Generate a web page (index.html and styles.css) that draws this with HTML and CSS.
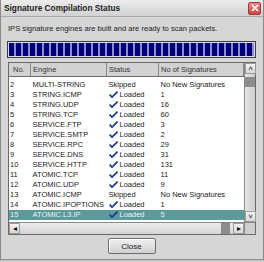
FILE: index.html
```html
<!DOCTYPE html>
<html lang="en">
<head>
    <meta charset="UTF-8">
    <title>Signature Compilation Status</title>
    <link rel="stylesheet" href="styles.css">
</head>
<body>
    <div class="window">
        <div class="titlebar">
            <span class="title">Signature Compilation Status</span>
            <span class="close-x">
                <svg width="10" height="10" viewBox="0 0 10 10"><path d="M2 2 L8 8 M8 2 L2 8" stroke="#fff" stroke-width="1.6"/></svg>
            </span>
        </div>
        <div class="content">
            <p class="msg">IPS signature engines are built and are ready to scan packets.</p>
            <div class="progress"><div class="progress-fill"></div></div>

            <div class="grid-box">
                <div class="grid-main">
                    <div class="grid-view">
                        <table class="sigs">
                            <thead>
                                <tr>
                                    <th class="c-no">No.</th>
                                    <th class="c-engine">Engine</th>
                                    <th class="c-status">Status</th>
                                    <th class="c-count">No of Signatures</th>
                                </tr>
                            </thead>
                            <tbody>
                                <tr><td>2</td><td>MULTI-STRING</td><td>Skipped</td><td>No New Signatures</td></tr>
                                <tr><td>3</td><td>STRING.ICMP</td><td><span class="ok"></span>Loaded</td><td>1</td></tr>
                                <tr><td>4</td><td>STRING.UDP</td><td><span class="ok"></span>Loaded</td><td>16</td></tr>
                                <tr><td>5</td><td>STRING.TCP</td><td><span class="ok"></span>Loaded</td><td>60</td></tr>
                                <tr><td>6</td><td>SERVICE.FTP</td><td><span class="ok"></span>Loaded</td><td>3</td></tr>
                                <tr><td>7</td><td>SERVICE.SMTP</td><td><span class="ok"></span>Loaded</td><td>2</td></tr>
                                <tr><td>8</td><td>SERVICE.RPC</td><td><span class="ok"></span>Loaded</td><td>29</td></tr>
                                <tr><td>9</td><td>SERVICE.DNS</td><td><span class="ok"></span>Loaded</td><td>31</td></tr>
                                <tr><td>10</td><td>SERVICE.HTTP</td><td><span class="ok"></span>Loaded</td><td>131</td></tr>
                                <tr><td>11</td><td>ATOMIC.TCP</td><td><span class="ok"></span>Loaded</td><td>11</td></tr>
                                <tr><td>12</td><td>ATOMIC.UDP</td><td><span class="ok"></span>Loaded</td><td>9</td></tr>
                                <tr><td>13</td><td>ATOMIC.ICMP</td><td>Skipped</td><td>No New Signatures</td></tr>
                                <tr><td>14</td><td>ATOMIC.IPOPTIONS</td><td><span class="ok"></span>Loaded</td><td>1</td></tr>
                                <tr class="selected"><td>15</td><td>ATOMIC.L3.IP</td><td><span class="ok"></span>Loaded</td><td>5</td></tr>
                            </tbody>
                        </table>
                    </div>
                    <div class="vscroll">
                        <span class="arrow">&#x2C4;</span>
                        <span class="vtrack"><span class="vthumb"></span></span>
                        <span class="arrow">&#x2C5;</span>
                    </div>
                </div>
                <div class="hscroll">
                    <span class="arrow">&#x25C2;</span>
                    <span class="htrack"><span class="hthumb"></span></span>
                    <span class="arrow">&#x25B8;</span>
                    <span class="corner"></span>
                </div>
            </div>

            <div class="actions">
                <button class="close-btn">Close</button>
            </div>
        </div>
    </div>
</body>
</html>
```

FILE: styles.css
```css
html, body {
    margin: 0;
    padding: 0;
}
body {
    width: 264px;
    height: 262px;
    font-family: "Liberation Sans", Arial, sans-serif;
    color: #222;
    background: #c8c8c8;
}
.window {
    box-sizing: border-box;
    width: 264px;
    height: 260px;
    border: 1px solid #8a8a8a;
    border-top: none;
    background: #d6d6d6;
    display: flex;
    flex-direction: column;
}
.titlebar {
    height: 16px;
    display: flex;
    align-items: center;
    justify-content: space-between;
    padding: 0 2px 0 3px;
    background: linear-gradient(#ececec, #d2d2d2);
    border-bottom: 1px solid #a8a8a8;
}
.title {
    font-size: 8.3px;
    font-weight: bold;
    color: #1c1c1c;
}
.close-x {
    width: 11px;
    height: 11px;
    display: flex;
    align-items: center;
    justify-content: center;
    background: linear-gradient(#e98c8c, #c84848);
    border: 1px solid #a03a3a;
    border-radius: 2px;
}
.content {
    padding: 0 7px 0 6px;
    display: flex;
    flex-direction: column;
}
.msg {
    margin: 6px 0 0 1px;
    font-size: 7.6px;
    height: 12px;
    line-height: 12px;
}
.progress {
    margin-top: 6px;
    height: 17px;
    box-sizing: border-box;
    border: 1px solid #3a3a50;
    padding: 1px;
    background: #dcdcec;
}
.progress-fill {
    height: 100%;
    background: repeating-linear-gradient(to right, #00007a 0 5px, #8c8cc8 5px 7px);
}
.grid-box {
    margin-top: 4px;
    margin-left: 1px;
    border: 1px solid #6a6a6a;
    display: flex;
    flex-direction: column;
}
.grid-main {
    display: flex;
    height: 159px;
}
.grid-view {
    flex: 1;
    background: #fff;
    overflow: hidden;
}
.sigs {
    border-collapse: collapse;
    width: 100%;
    font-size: 7.5px;
    table-layout: fixed;
}
.sigs th {
    height: 13px;
    padding: 0 0 0 2px;
    text-align: left;
    font-weight: normal;
    background: #d2d2d2;
    border-right: 1px solid #8a8a8a;
    border-bottom: 1px solid #6a6a6a;
    color: #333;
}
.sigs th.c-no { width: 17px; padding-left: 4px; }
.sigs th.c-engine { width: 73px; }
.sigs th.c-status { width: 49px; }
.sigs th.c-count { border-right: 1px solid #8a8a8a; }
.sigs tbody tr:first-child td { padding-top: 3px; }
.sigs td {
    height: 10px;
    padding: 0 0 0 2px;
    line-height: 10px;
    white-space: nowrap;
    overflow: hidden;
}
.sigs td:first-child { padding-left: 1px; }
.sigs tr.selected td {
    background: #5a9a98;
    color: #e8f4f4;
}
.ok {
    display: inline-block;
    width: 9px;
    height: 7px;
    margin-right: 2px;
    vertical-align: -1px;
    background: url("data:image/svg+xml,%3Csvg xmlns='http://www.w3.org/2000/svg' viewBox='0 0 9 7'%3E%3Cpath d='M0.6 3.6 L3 6.2 L8.6 0.6' fill='none' stroke='%231d3f97' stroke-width='1.7'/%3E%3C/svg%3E") no-repeat;
}
.vscroll {
    width: 10px;
    border-left: 1px solid #8a8a8a;
    background: #dadada;
    display: flex;
    flex-direction: column;
}
.arrow {
    height: 11px;
    min-width: 11px;
    display: flex;
    align-items: center;
    justify-content: center;
    font-size: 8px;
    background: linear-gradient(#f4f4f4, #d6d6d6);
    border: 1px solid #9a9a9a;
    box-sizing: border-box;
    color: #111;
}
.vtrack {
    flex: 1;
    position: relative;
    background: linear-gradient(to right, #e4e4e4, #cfcfcf);
}
.vthumb {
    position: absolute;
    left: 0;
    right: 0;
    top: 3px;
    height: 10px;
    background: #8c8c8c;
}
.hscroll {
    height: 11px;
    display: flex;
    border-top: 1px solid #8a8a8a;
    background: #e0e0e0;
}
.htrack {
    flex: 1;
    position: relative;
    background: linear-gradient(#ececec, #d4d4d4);
}
.hthumb {
    position: absolute;
    right: 3px;
    top: 0;
    bottom: 0;
    width: 9px;
    background: #8c8c8c;
}
.corner {
    width: 10px;
    background: #cfcfcf;
    border-left: 1px solid #8a8a8a;
}
.actions {
    display: flex;
    justify-content: center;
    margin-top: 3px;
}
.close-btn {
    width: 48px;
    height: 16px;
    padding: 0;
    font-family: "Liberation Sans", Arial, sans-serif;
    font-size: 8px;
    color: #222;
    background: linear-gradient(#f0f0f0, #d0d0d0);
    border: 1px solid #6e6e6e;
    border-radius: 2px;
    box-shadow: inset 1px 1px 0 #fff;
}
```
